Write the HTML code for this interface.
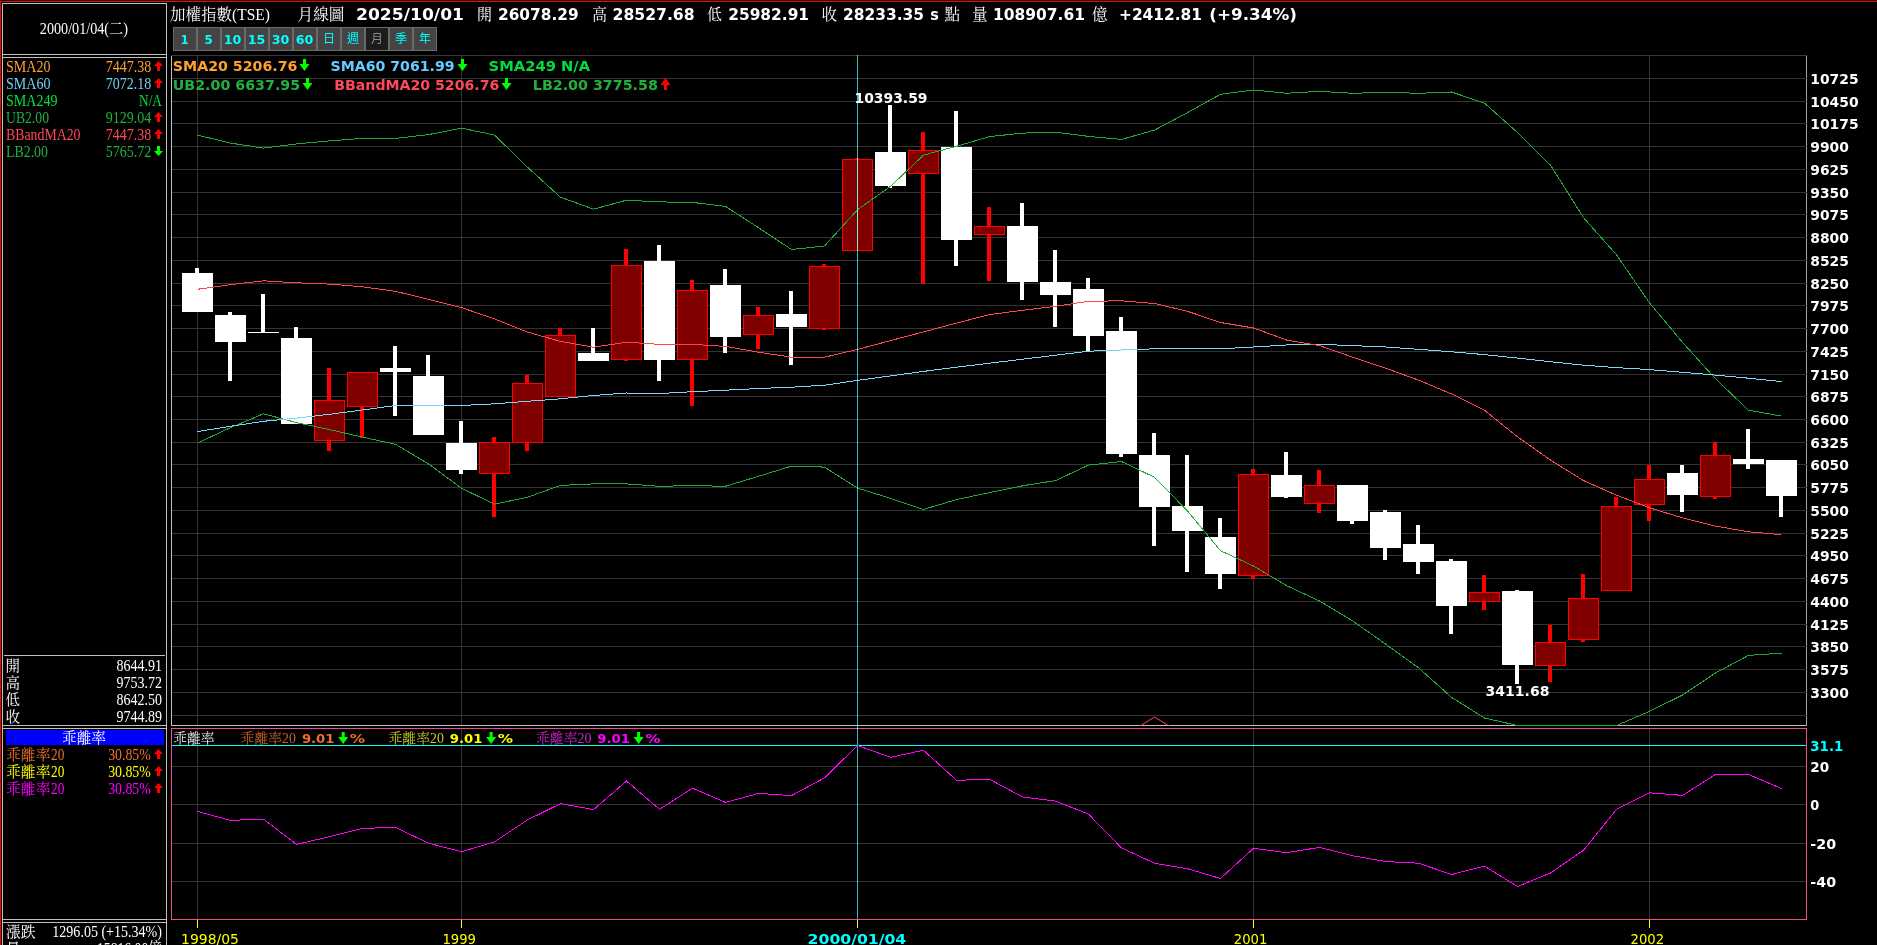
<!DOCTYPE html>
<html lang="zh-Hant"><head><meta charset="utf-8"><title>加權指數(TSE) 月線圖</title>
<style>html,body{margin:0;padding:0;background:#000;width:1877px;height:945px;overflow:hidden}svg text{white-space:pre}</style>
</head><body>
<svg width="1877" height="945" viewBox="0 0 1877 945" style="display:block">
<rect x="0" y="0" width="1877" height="945" fill="#000"/>
<g shape-rendering="crispEdges">
<rect x="0" y="1" width="1877" height="1" fill="#ff0000"/>
<rect x="0" y="1" width="1" height="944" fill="#ff0000"/>
<rect x="2" y="3" width="1" height="942" fill="#c0c0c0"/>
<rect x="166" y="3" width="1" height="942" fill="#c0c0c0"/>
<rect x="2" y="3" width="165" height="1" fill="#c0c0c0"/>
<rect x="2" y="54" width="165" height="1" fill="#c0c0c0"/>
<rect x="2" y="57" width="165" height="1" fill="#c0c0c0"/>
<rect x="2" y="725" width="165" height="1" fill="#c0c0c0"/>
<rect x="2" y="728" width="165" height="1" fill="#c0c0c0"/>
<rect x="2" y="919" width="165" height="1" fill="#c0c0c0"/>
<rect x="2" y="922" width="165" height="1" fill="#c0c0c0"/>
<rect x="4" y="655" width="161" height="1" fill="#c0c0c0"/>
<rect x="6" y="730" width="158" height="15" fill="#0000ff"/>
<rect x="173" y="27" width="24" height="24" fill="#6a6a6a"/>
<rect x="174" y="28" width="22" height="22" fill="#454343"/>
<rect x="197" y="27" width="24" height="24" fill="#6a6a6a"/>
<rect x="198" y="28" width="22" height="22" fill="#454343"/>
<rect x="221" y="27" width="24" height="24" fill="#6a6a6a"/>
<rect x="222" y="28" width="22" height="22" fill="#454343"/>
<rect x="245" y="27" width="24" height="24" fill="#6a6a6a"/>
<rect x="246" y="28" width="22" height="22" fill="#454343"/>
<rect x="269" y="27" width="24" height="24" fill="#6a6a6a"/>
<rect x="270" y="28" width="22" height="22" fill="#454343"/>
<rect x="293" y="27" width="24" height="24" fill="#6a6a6a"/>
<rect x="294" y="28" width="22" height="22" fill="#454343"/>
<rect x="317" y="27" width="24" height="24" fill="#6a6a6a"/>
<rect x="318" y="28" width="22" height="22" fill="#454343"/>
<rect x="341" y="27" width="24" height="24" fill="#6a6a6a"/>
<rect x="342" y="28" width="22" height="22" fill="#454343"/>
<rect x="365" y="27" width="24" height="24" fill="#6a6a6a"/>
<rect x="366" y="28" width="22" height="22" fill="#1c1c1c"/>
<rect x="389" y="27" width="24" height="24" fill="#6a6a6a"/>
<rect x="390" y="28" width="22" height="22" fill="#454343"/>
<rect x="413" y="27" width="24" height="24" fill="#6a6a6a"/>
<rect x="414" y="28" width="22" height="22" fill="#454343"/>
<rect x="197" y="56" width="1" height="669" fill="#343434"/>
<rect x="197" y="729" width="1" height="190" fill="#343434"/>
<rect x="461" y="56" width="1" height="669" fill="#343434"/>
<rect x="461" y="729" width="1" height="190" fill="#343434"/>
<rect x="1253" y="56" width="1" height="669" fill="#343434"/>
<rect x="1253" y="729" width="1" height="190" fill="#343434"/>
<rect x="1649" y="56" width="1" height="669" fill="#343434"/>
<rect x="1649" y="729" width="1" height="190" fill="#343434"/>
<rect x="172" y="766" width="1634" height="1" fill="#343434"/>
<rect x="172" y="804" width="1634" height="1" fill="#343434"/>
<rect x="172" y="843" width="1634" height="1" fill="#343434"/>
<rect x="172" y="881" width="1634" height="1" fill="#343434"/>
<rect x="171" y="55" width="1636" height="1" fill="#383838"/>
<rect x="171" y="56" width="1" height="670" fill="#c0c0c0"/>
<rect x="171" y="725" width="1636" height="1" fill="#c0c0c0"/>
<rect x="1806" y="56" width="1" height="670" fill="#a8a8a8"/>
<rect x="172" y="78" width="1635" height="1" fill="#343434"/>
<rect x="172" y="101" width="1635" height="1" fill="#343434"/>
<rect x="172" y="123" width="1635" height="1" fill="#343434"/>
<rect x="172" y="146" width="1635" height="1" fill="#343434"/>
<rect x="172" y="169" width="1635" height="1" fill="#343434"/>
<rect x="172" y="192" width="1635" height="1" fill="#343434"/>
<rect x="172" y="214" width="1635" height="1" fill="#343434"/>
<rect x="172" y="237" width="1635" height="1" fill="#343434"/>
<rect x="172" y="260" width="1635" height="1" fill="#343434"/>
<rect x="172" y="283" width="1635" height="1" fill="#343434"/>
<rect x="172" y="305" width="1635" height="1" fill="#343434"/>
<rect x="172" y="328" width="1635" height="1" fill="#343434"/>
<rect x="172" y="351" width="1635" height="1" fill="#343434"/>
<rect x="172" y="374" width="1635" height="1" fill="#343434"/>
<rect x="172" y="396" width="1635" height="1" fill="#343434"/>
<rect x="172" y="419" width="1635" height="1" fill="#343434"/>
<rect x="172" y="442" width="1635" height="1" fill="#343434"/>
<rect x="172" y="464" width="1635" height="1" fill="#343434"/>
<rect x="172" y="487" width="1635" height="1" fill="#343434"/>
<rect x="172" y="510" width="1635" height="1" fill="#343434"/>
<rect x="172" y="533" width="1635" height="1" fill="#343434"/>
<rect x="172" y="555" width="1635" height="1" fill="#343434"/>
<rect x="172" y="578" width="1635" height="1" fill="#343434"/>
<rect x="172" y="601" width="1635" height="1" fill="#343434"/>
<rect x="172" y="624" width="1635" height="1" fill="#343434"/>
<rect x="172" y="646" width="1635" height="1" fill="#343434"/>
<rect x="172" y="669" width="1635" height="1" fill="#343434"/>
<rect x="172" y="692" width="1635" height="1" fill="#343434"/>
<rect x="172" y="715" width="1635" height="1" fill="#343434"/>
<rect x="171" y="728" width="1636" height="1" fill="#ee4c98"/>
<rect x="171" y="919" width="1636" height="1" fill="#ee4c98"/>
<rect x="171" y="728" width="1" height="192" fill="#ee4c98"/>
<rect x="1806" y="728" width="1" height="192" fill="#ee4c98"/>
<rect x="197" y="920" width="1" height="8" fill="#ffff00"/>
<rect x="461" y="920" width="1" height="8" fill="#ffff00"/>
<rect x="857" y="920" width="1" height="8" fill="#ffff00"/>
<rect x="1253" y="920" width="1" height="8" fill="#ffff00"/>
<rect x="1649" y="920" width="1" height="8" fill="#ffff00"/>
</g>
<defs><clipPath id="cm"><rect x="172" y="56" width="1634" height="670"/></clipPath></defs>
<g clip-path="url(#cm)">
<g shape-rendering="crispEdges">
<rect x="195" y="268" width="4" height="5" fill="#ffffff"/>
<rect x="182" y="273" width="31" height="39" fill="#ffffff"/>
<rect x="228" y="312" width="4" height="3" fill="#ffffff"/>
<rect x="228" y="342" width="4" height="39" fill="#ffffff"/>
<rect x="215" y="315" width="31" height="27" fill="#ffffff"/>
<rect x="261" y="294" width="4" height="38" fill="#ffffff"/>
<rect x="248" y="332" width="31" height="1" fill="#ffffff"/>
<rect x="294" y="327" width="4" height="11" fill="#ffffff"/>
<rect x="281" y="338" width="31" height="86" fill="#ffffff"/>
<rect x="327" y="368" width="4" height="32" fill="#ff0000"/>
<rect x="327" y="441" width="4" height="10" fill="#ff0000"/>
<rect x="314" y="400" width="31" height="41" fill="#ff0000"/>
<rect x="315" y="401" width="29" height="39" fill="#800000"/>
<rect x="360" y="407" width="4" height="31" fill="#ff0000"/>
<rect x="347" y="372" width="31" height="35" fill="#ff0000"/>
<rect x="348" y="373" width="29" height="33" fill="#800000"/>
<rect x="393" y="346" width="4" height="22" fill="#ffffff"/>
<rect x="393" y="372" width="4" height="44" fill="#ffffff"/>
<rect x="380" y="368" width="31" height="4" fill="#ffffff"/>
<rect x="426" y="355" width="4" height="21" fill="#ffffff"/>
<rect x="413" y="376" width="31" height="59" fill="#ffffff"/>
<rect x="459" y="421" width="4" height="22" fill="#ffffff"/>
<rect x="459" y="470" width="4" height="4" fill="#ffffff"/>
<rect x="446" y="443" width="31" height="27" fill="#ffffff"/>
<rect x="492" y="437" width="4" height="5" fill="#ff0000"/>
<rect x="492" y="474" width="4" height="43" fill="#ff0000"/>
<rect x="479" y="442" width="31" height="32" fill="#ff0000"/>
<rect x="480" y="443" width="29" height="30" fill="#800000"/>
<rect x="525" y="375" width="4" height="8" fill="#ff0000"/>
<rect x="525" y="443" width="4" height="8" fill="#ff0000"/>
<rect x="512" y="383" width="31" height="60" fill="#ff0000"/>
<rect x="513" y="384" width="29" height="58" fill="#800000"/>
<rect x="558" y="328" width="4" height="7" fill="#ff0000"/>
<rect x="545" y="335" width="31" height="62" fill="#ff0000"/>
<rect x="546" y="336" width="29" height="60" fill="#800000"/>
<rect x="591" y="328" width="4" height="25" fill="#ffffff"/>
<rect x="578" y="353" width="31" height="8" fill="#ffffff"/>
<rect x="624" y="249" width="4" height="16" fill="#ff0000"/>
<rect x="624" y="360" width="4" height="1" fill="#ff0000"/>
<rect x="611" y="265" width="31" height="95" fill="#ff0000"/>
<rect x="612" y="266" width="29" height="93" fill="#800000"/>
<rect x="657" y="245" width="4" height="16" fill="#ffffff"/>
<rect x="657" y="360" width="4" height="21" fill="#ffffff"/>
<rect x="644" y="261" width="31" height="99" fill="#ffffff"/>
<rect x="690" y="280" width="4" height="10" fill="#ff0000"/>
<rect x="690" y="360" width="4" height="46" fill="#ff0000"/>
<rect x="677" y="290" width="31" height="70" fill="#ff0000"/>
<rect x="678" y="291" width="29" height="68" fill="#800000"/>
<rect x="723" y="269" width="4" height="16" fill="#ffffff"/>
<rect x="723" y="337" width="4" height="16" fill="#ffffff"/>
<rect x="710" y="285" width="31" height="52" fill="#ffffff"/>
<rect x="756" y="307" width="4" height="8" fill="#ff0000"/>
<rect x="756" y="335" width="4" height="14" fill="#ff0000"/>
<rect x="743" y="315" width="31" height="20" fill="#ff0000"/>
<rect x="744" y="316" width="29" height="18" fill="#800000"/>
<rect x="789" y="291" width="4" height="23" fill="#ffffff"/>
<rect x="789" y="327" width="4" height="38" fill="#ffffff"/>
<rect x="776" y="314" width="31" height="13" fill="#ffffff"/>
<rect x="822" y="264" width="4" height="2" fill="#ff0000"/>
<rect x="822" y="329" width="4" height="1" fill="#ff0000"/>
<rect x="809" y="266" width="31" height="63" fill="#ff0000"/>
<rect x="810" y="267" width="29" height="61" fill="#800000"/>
<rect x="855" y="158" width="4" height="1" fill="#ff0000"/>
<rect x="842" y="159" width="31" height="92" fill="#ff0000"/>
<rect x="843" y="160" width="29" height="90" fill="#800000"/>
<rect x="888" y="105" width="4" height="47" fill="#ffffff"/>
<rect x="888" y="186" width="4" height="2" fill="#ffffff"/>
<rect x="875" y="152" width="31" height="34" fill="#ffffff"/>
<rect x="921" y="132" width="4" height="18" fill="#ff0000"/>
<rect x="921" y="174" width="4" height="110" fill="#ff0000"/>
<rect x="908" y="150" width="31" height="24" fill="#ff0000"/>
<rect x="909" y="151" width="29" height="22" fill="#800000"/>
<rect x="954" y="111" width="4" height="36" fill="#ffffff"/>
<rect x="954" y="240" width="4" height="26" fill="#ffffff"/>
<rect x="941" y="147" width="31" height="93" fill="#ffffff"/>
<rect x="987" y="207" width="4" height="19" fill="#ff0000"/>
<rect x="987" y="235" width="4" height="46" fill="#ff0000"/>
<rect x="974" y="226" width="31" height="9" fill="#ff0000"/>
<rect x="975" y="227" width="29" height="7" fill="#800000"/>
<rect x="1020" y="203" width="4" height="23" fill="#ffffff"/>
<rect x="1020" y="282" width="4" height="18" fill="#ffffff"/>
<rect x="1007" y="226" width="31" height="56" fill="#ffffff"/>
<rect x="1053" y="250" width="4" height="32" fill="#ffffff"/>
<rect x="1053" y="295" width="4" height="32" fill="#ffffff"/>
<rect x="1040" y="282" width="31" height="13" fill="#ffffff"/>
<rect x="1086" y="278" width="4" height="11" fill="#ffffff"/>
<rect x="1086" y="336" width="4" height="15" fill="#ffffff"/>
<rect x="1073" y="289" width="31" height="47" fill="#ffffff"/>
<rect x="1119" y="317" width="4" height="14" fill="#ffffff"/>
<rect x="1119" y="454" width="4" height="3" fill="#ffffff"/>
<rect x="1106" y="331" width="31" height="123" fill="#ffffff"/>
<rect x="1152" y="433" width="4" height="22" fill="#ffffff"/>
<rect x="1152" y="507" width="4" height="39" fill="#ffffff"/>
<rect x="1139" y="455" width="31" height="52" fill="#ffffff"/>
<rect x="1185" y="455" width="4" height="51" fill="#ffffff"/>
<rect x="1185" y="531" width="4" height="41" fill="#ffffff"/>
<rect x="1172" y="506" width="31" height="25" fill="#ffffff"/>
<rect x="1218" y="518" width="4" height="19" fill="#ffffff"/>
<rect x="1218" y="574" width="4" height="15" fill="#ffffff"/>
<rect x="1205" y="537" width="31" height="37" fill="#ffffff"/>
<rect x="1251" y="469" width="4" height="5" fill="#ff0000"/>
<rect x="1251" y="576" width="4" height="3" fill="#ff0000"/>
<rect x="1238" y="474" width="31" height="102" fill="#ff0000"/>
<rect x="1239" y="475" width="29" height="100" fill="#800000"/>
<rect x="1284" y="452" width="4" height="23" fill="#ffffff"/>
<rect x="1284" y="497" width="4" height="1" fill="#ffffff"/>
<rect x="1271" y="475" width="31" height="22" fill="#ffffff"/>
<rect x="1317" y="470" width="4" height="15" fill="#ff0000"/>
<rect x="1317" y="504" width="4" height="9" fill="#ff0000"/>
<rect x="1304" y="485" width="31" height="19" fill="#ff0000"/>
<rect x="1305" y="486" width="29" height="17" fill="#800000"/>
<rect x="1350" y="521" width="4" height="3" fill="#ffffff"/>
<rect x="1337" y="485" width="31" height="36" fill="#ffffff"/>
<rect x="1383" y="510" width="4" height="2" fill="#ffffff"/>
<rect x="1383" y="548" width="4" height="12" fill="#ffffff"/>
<rect x="1370" y="512" width="31" height="36" fill="#ffffff"/>
<rect x="1416" y="525" width="4" height="19" fill="#ffffff"/>
<rect x="1416" y="562" width="4" height="12" fill="#ffffff"/>
<rect x="1403" y="544" width="31" height="18" fill="#ffffff"/>
<rect x="1449" y="559" width="4" height="2" fill="#ffffff"/>
<rect x="1449" y="606" width="4" height="28" fill="#ffffff"/>
<rect x="1436" y="561" width="31" height="45" fill="#ffffff"/>
<rect x="1482" y="575" width="4" height="17" fill="#ff0000"/>
<rect x="1482" y="602" width="4" height="8" fill="#ff0000"/>
<rect x="1469" y="592" width="31" height="10" fill="#ff0000"/>
<rect x="1470" y="593" width="29" height="8" fill="#800000"/>
<rect x="1515" y="590" width="4" height="1" fill="#ffffff"/>
<rect x="1515" y="665" width="4" height="19" fill="#ffffff"/>
<rect x="1502" y="591" width="31" height="74" fill="#ffffff"/>
<rect x="1548" y="625" width="4" height="17" fill="#ff0000"/>
<rect x="1548" y="666" width="4" height="16" fill="#ff0000"/>
<rect x="1535" y="642" width="31" height="24" fill="#ff0000"/>
<rect x="1536" y="643" width="29" height="22" fill="#800000"/>
<rect x="1581" y="574" width="4" height="24" fill="#ff0000"/>
<rect x="1581" y="640" width="4" height="2" fill="#ff0000"/>
<rect x="1568" y="598" width="31" height="42" fill="#ff0000"/>
<rect x="1569" y="599" width="29" height="40" fill="#800000"/>
<rect x="1614" y="497" width="4" height="9" fill="#ff0000"/>
<rect x="1601" y="506" width="31" height="85" fill="#ff0000"/>
<rect x="1602" y="507" width="29" height="83" fill="#800000"/>
<rect x="1647" y="465" width="4" height="14" fill="#ff0000"/>
<rect x="1647" y="505" width="4" height="16" fill="#ff0000"/>
<rect x="1634" y="479" width="31" height="26" fill="#ff0000"/>
<rect x="1635" y="480" width="29" height="24" fill="#800000"/>
<rect x="1680" y="465" width="4" height="8" fill="#ffffff"/>
<rect x="1680" y="495" width="4" height="17" fill="#ffffff"/>
<rect x="1667" y="473" width="31" height="22" fill="#ffffff"/>
<rect x="1713" y="442" width="4" height="13" fill="#ff0000"/>
<rect x="1713" y="497" width="4" height="2" fill="#ff0000"/>
<rect x="1700" y="455" width="31" height="42" fill="#ff0000"/>
<rect x="1701" y="456" width="29" height="40" fill="#800000"/>
<rect x="1746" y="429" width="4" height="30" fill="#ffffff"/>
<rect x="1746" y="464" width="4" height="5" fill="#ffffff"/>
<rect x="1733" y="459" width="31" height="5" fill="#ffffff"/>
<rect x="1779" y="496" width="4" height="21" fill="#ffffff"/>
<rect x="1766" y="460" width="31" height="36" fill="#ffffff"/>
</g>
<polyline points="197.5,135.1 230.5,143.1 263.5,148.1 296.5,143.9 329.5,140.9 362.5,138.4 395.5,138.4 428.5,134.6 461.5,128.1 494.5,135.1 527.5,167.2 560.5,197.2 593.5,209.2 626.5,200.2 659.5,201.9 692.5,202.4 725.5,206.4 758.5,227.7 791.5,249.5 824.5,246 857.5,209.7 890.5,186.4 923.5,155.1 956.5,146.3 989.5,136.6 1022.5,133.1 1055.5,132.1 1088.5,136.4 1121.5,139.4 1154.5,130.1 1187.5,112.6 1220.5,94.3 1253.5,90 1286.5,93.3 1319.5,91.3 1352.5,93.3 1385.5,92.3 1418.5,93.3 1451.5,92 1484.5,103.1 1517.5,132.6 1550.5,165.2 1583.5,217.7 1616.5,254.8 1649.5,302.9 1682.5,342.4 1715.5,378.8 1748.5,410.2 1781.5,416.1" fill="none" stroke="#22aa38" stroke-width="1" shape-rendering="crispEdges"/>
<polyline points="197.5,443.1 230.5,427.6 263.5,413.8 296.5,422.6 329.5,429.6 362.5,437.1 395.5,444.3 428.5,463.9 461.5,488.2 494.5,504.2 527.5,497.2 560.5,485.4 593.5,483.9 626.5,483.9 659.5,486.3 692.5,485.6 725.5,486.3 758.5,476.3 791.5,466.1 824.5,467.1 857.5,488.1 890.5,498.4 923.5,509.4 956.5,499.6 989.5,492.6 1022.5,485.8 1055.5,480.6 1088.5,465.1 1121.5,461.5 1154.5,477.3 1187.5,511 1220.5,550.7 1253.5,566 1286.5,585.6 1319.5,601 1352.5,620.8 1385.5,644 1418.5,667.8 1451.5,697.3 1484.5,718 1517.5,725.5 1550.5,725.5 1583.5,725.5 1616.5,725.5 1649.5,711.4 1682.5,695 1715.5,673 1748.5,655.4 1781.5,653.2" fill="none" stroke="#22aa38" stroke-width="1" shape-rendering="crispEdges"/>
<polyline points="197.5,431.6 230.5,426.3 263.5,421.3 296.5,418.1 329.5,414.3 362.5,410 395.5,405.5 428.5,405.5 461.5,405.5 494.5,403.8 527.5,401.3 560.5,398.8 593.5,395.5 626.5,393 659.5,393.5 692.5,391.7 725.5,390.2 758.5,388.5 791.5,387.2 824.5,385.2 857.5,380.4 890.5,375.9 923.5,371.4 956.5,367.2 989.5,363.2 1022.5,359.2 1055.5,355.2 1088.5,351.2 1121.5,350 1154.5,348.8 1187.5,348.8 1220.5,348.8 1253.5,347 1286.5,345 1319.5,344.3 1352.5,345.6 1385.5,347 1418.5,349.3 1451.5,351.8 1484.5,354.6 1517.5,358.1 1550.5,361.7 1583.5,365.2 1616.5,367.6 1649.5,369.6 1682.5,372.3 1715.5,375.1 1748.5,378.2 1781.5,381.6" fill="none" stroke="#78d6fa" stroke-width="1" shape-rendering="crispEdges"/>
<polyline points="197.5,289.3 230.5,284.6 263.5,280.8 296.5,282.8 329.5,284.1 362.5,286.8 395.5,291.3 428.5,299.3 461.5,307.6 494.5,318.9 527.5,332.1 560.5,341.4 593.5,347.2 626.5,342.2 659.5,344.4 692.5,344.4 725.5,346.4 758.5,352.2 791.5,357.2 824.5,357.2 857.5,349.4 890.5,340.6 923.5,331.9 956.5,323.1 989.5,314.6 1022.5,310.3 1055.5,306.3 1088.5,301.3 1121.5,300.8 1154.5,303.5 1187.5,311.3 1220.5,322.5 1253.5,328 1286.5,340 1319.5,345.6 1352.5,357.1 1385.5,368.1 1418.5,380.1 1451.5,393.9 1484.5,410.3 1517.5,436.8 1550.5,460.1 1583.5,480.6 1616.5,495.2 1649.5,507.8 1682.5,517.9 1715.5,526.1 1748.5,531.8 1781.5,534.6" fill="none" stroke="#ff4550" stroke-width="1" shape-rendering="crispEdges"/>
<polyline points="1140,726 1154.5,717 1169,726" fill="none" stroke="#ff4550" stroke-width="1"/>
</g>
<g shape-rendering="crispEdges" style="mix-blend-mode:screen">
<rect x="857" y="55" width="1" height="864" fill="#33bbbb"/>
<rect x="172" y="745" width="1634" height="1" fill="#00ffff"/>
</g>
<rect x="857" y="160" width="1" height="90" fill="#8ae8e8" shape-rendering="crispEdges"/>
<polyline points="197.5,811.4 230.5,820.4 263.5,819.1 296.5,844.4 329.5,836.7 362.5,828.4 395.5,827.4 428.5,843.2 461.5,851.7 494.5,841.9 527.5,819.9 560.5,803.6 593.5,809.6 626.5,781.1 659.5,809.4 692.5,788.1 725.5,802.4 758.5,793.4 791.5,795.6 824.5,777.8 857.5,745.5 890.5,757.3 923.5,750.3 956.5,780.3 989.5,779.3 1022.5,796.9 1055.5,801.1 1088.5,814.1 1121.5,847.9 1154.5,863.2 1187.5,868.7 1220.5,878.5 1253.5,848.2 1286.5,852.7 1319.5,847.4 1352.5,855.7 1385.5,861.5 1418.5,863.2 1451.5,874.5 1484.5,866.2 1517.5,886.5 1550.5,873 1583.5,850.3 1616.5,809.4 1649.5,792.8 1682.5,795.4 1715.5,774.4 1748.5,774.4 1781.5,788.6" fill="none" stroke="#ff00ff" stroke-width="1" shape-rendering="crispEdges"/>
<text x="170" y="20" font-family="'Liberation Serif','Noto Serif CJK SC',serif" font-size="16" font-weight="normal" fill="#fff" textLength="100" lengthAdjust="spacingAndGlyphs">加權指數(TSE)</text>
<text x="297.5" y="20" font-family="'Liberation Serif','Noto Serif CJK SC',serif" font-size="16" font-weight="normal" fill="#fff" textLength="47" lengthAdjust="spacingAndGlyphs">月線圖</text>
<text x="356" y="20" font-family="'DejaVu Sans','Liberation Sans',sans-serif" font-size="16" font-weight="bold" fill="#fff" textLength="108" lengthAdjust="spacingAndGlyphs">2025/10/01</text>
<text x="477" y="20" font-family="'Liberation Serif','Noto Serif CJK SC',serif" font-size="16" font-weight="normal" fill="#fff" textLength="15" lengthAdjust="spacingAndGlyphs">開</text>
<text x="498" y="20" font-family="'DejaVu Sans','Liberation Sans',sans-serif" font-size="16" font-weight="bold" fill="#fff" textLength="80.6" lengthAdjust="spacingAndGlyphs">26078.29</text>
<text x="592" y="20" font-family="'Liberation Serif','Noto Serif CJK SC',serif" font-size="16" font-weight="normal" fill="#fff" textLength="15" lengthAdjust="spacingAndGlyphs">高</text>
<text x="612.5" y="20" font-family="'DejaVu Sans','Liberation Sans',sans-serif" font-size="16" font-weight="bold" fill="#fff" textLength="82.1" lengthAdjust="spacingAndGlyphs">28527.68</text>
<text x="707" y="20" font-family="'Liberation Serif','Noto Serif CJK SC',serif" font-size="16" font-weight="normal" fill="#fff" textLength="15" lengthAdjust="spacingAndGlyphs">低</text>
<text x="728.2" y="20" font-family="'DejaVu Sans','Liberation Sans',sans-serif" font-size="16" font-weight="bold" fill="#fff" textLength="80.9" lengthAdjust="spacingAndGlyphs">25982.91</text>
<text x="821.5" y="20" font-family="'Liberation Serif','Noto Serif CJK SC',serif" font-size="16" font-weight="normal" fill="#fff" textLength="15.5" lengthAdjust="spacingAndGlyphs">收</text>
<text x="843" y="20" font-family="'DejaVu Sans','Liberation Sans',sans-serif" font-size="16" font-weight="bold" fill="#fff" textLength="81" lengthAdjust="spacingAndGlyphs">28233.35</text>
<text x="930.3" y="20" font-family="'DejaVu Sans','Liberation Sans',sans-serif" font-size="16" font-weight="bold" fill="#fff" textLength="8.6" lengthAdjust="spacingAndGlyphs">s</text>
<text x="944.5" y="20" font-family="'Liberation Serif','Noto Serif CJK SC',serif" font-size="16" font-weight="normal" fill="#fff" textLength="15.5" lengthAdjust="spacingAndGlyphs">點</text>
<text x="972" y="20" font-family="'Liberation Serif','Noto Serif CJK SC',serif" font-size="16" font-weight="normal" fill="#fff" textLength="15.5" lengthAdjust="spacingAndGlyphs">量</text>
<text x="993" y="20" font-family="'DejaVu Sans','Liberation Sans',sans-serif" font-size="16" font-weight="bold" fill="#fff" textLength="92" lengthAdjust="spacingAndGlyphs">108907.61</text>
<text x="1092" y="20" font-family="'Liberation Serif','Noto Serif CJK SC',serif" font-size="16" font-weight="normal" fill="#fff" textLength="15.5" lengthAdjust="spacingAndGlyphs">億</text>
<text x="1119" y="20" font-family="'DejaVu Sans','Liberation Sans',sans-serif" font-size="16" font-weight="bold" fill="#fff" textLength="83" lengthAdjust="spacingAndGlyphs">+2412.81</text>
<text x="1209.3" y="20" font-family="'DejaVu Sans','Liberation Sans',sans-serif" font-size="16" font-weight="bold" fill="#fff" textLength="87.7" lengthAdjust="spacingAndGlyphs">(+9.34%)</text>
<text x="184.6" y="44" font-family="'DejaVu Sans','Liberation Sans',sans-serif" font-size="12.3" font-weight="bold" fill="#00ffff" textLength="8.2" lengthAdjust="spacingAndGlyphs" text-anchor="middle">1</text>
<text x="208.6" y="44" font-family="'DejaVu Sans','Liberation Sans',sans-serif" font-size="12.3" font-weight="bold" fill="#00ffff" textLength="8.2" lengthAdjust="spacingAndGlyphs" text-anchor="middle">5</text>
<text x="232.6" y="44" font-family="'DejaVu Sans','Liberation Sans',sans-serif" font-size="12.3" font-weight="bold" fill="#00ffff" textLength="17.6" lengthAdjust="spacingAndGlyphs" text-anchor="middle">10</text>
<text x="256.6" y="44" font-family="'DejaVu Sans','Liberation Sans',sans-serif" font-size="12.3" font-weight="bold" fill="#00ffff" textLength="17.6" lengthAdjust="spacingAndGlyphs" text-anchor="middle">15</text>
<text x="280.6" y="44" font-family="'DejaVu Sans','Liberation Sans',sans-serif" font-size="12.3" font-weight="bold" fill="#00ffff" textLength="17.6" lengthAdjust="spacingAndGlyphs" text-anchor="middle">30</text>
<text x="304.6" y="44" font-family="'DejaVu Sans','Liberation Sans',sans-serif" font-size="12.3" font-weight="bold" fill="#00ffff" textLength="17.6" lengthAdjust="spacingAndGlyphs" text-anchor="middle">60</text>
<text x="329" y="43.4" font-family="'Liberation Sans','Noto Sans CJK TC',sans-serif" font-size="12" font-weight="normal" fill="#00ffff" text-anchor="middle">日</text>
<text x="353" y="43.4" font-family="'Liberation Sans','Noto Sans CJK TC',sans-serif" font-size="12" font-weight="normal" fill="#00ffff" text-anchor="middle">週</text>
<text x="377" y="43.4" font-family="'Liberation Sans','Noto Sans CJK TC',sans-serif" font-size="12" font-weight="normal" fill="#8a8a8a" text-anchor="middle">月</text>
<text x="401" y="43.4" font-family="'Liberation Sans','Noto Sans CJK TC',sans-serif" font-size="12" font-weight="normal" fill="#00ffff" text-anchor="middle">季</text>
<text x="425" y="43.4" font-family="'Liberation Sans','Noto Sans CJK TC',sans-serif" font-size="12" font-weight="normal" fill="#00ffff" text-anchor="middle">年</text>
<text x="39.8" y="34" font-family="'Liberation Serif','Noto Serif CJK SC',serif" font-size="16" font-weight="normal" fill="#fff" textLength="88.2" lengthAdjust="spacingAndGlyphs">2000/01/04(二)</text>
<text x="6" y="72" font-family="'Liberation Serif','Noto Serif CJK SC',serif" font-size="16" font-weight="normal" fill="#ffa030" textLength="44.4" lengthAdjust="spacingAndGlyphs">SMA20</text>
<text x="105.7" y="72" font-family="'Liberation Serif','Noto Serif CJK SC',serif" font-size="16" font-weight="normal" fill="#ffa030" textLength="45.5" lengthAdjust="spacingAndGlyphs">7447.38</text>
<path d="M158.5 61 L163 66 L160 66 L160 71 L157 71 L157 66 L154 66 Z" fill="#ff0000"/>
<text x="6" y="89" font-family="'Liberation Serif','Noto Serif CJK SC',serif" font-size="16" font-weight="normal" fill="#70d0f5" textLength="44.4" lengthAdjust="spacingAndGlyphs">SMA60</text>
<text x="105.7" y="89" font-family="'Liberation Serif','Noto Serif CJK SC',serif" font-size="16" font-weight="normal" fill="#70d0f5" textLength="45.5" lengthAdjust="spacingAndGlyphs">7072.18</text>
<path d="M158.5 78 L163 83 L160 83 L160 88 L157 88 L157 83 L154 83 Z" fill="#ff0000"/>
<text x="6" y="106" font-family="'Liberation Serif','Noto Serif CJK SC',serif" font-size="16" font-weight="normal" fill="#00e040" textLength="51.5" lengthAdjust="spacingAndGlyphs">SMA249</text>
<text x="139" y="106" font-family="'Liberation Serif','Noto Serif CJK SC',serif" font-size="16" font-weight="normal" fill="#00e040" textLength="23" lengthAdjust="spacingAndGlyphs">N/A</text>
<text x="6" y="123" font-family="'Liberation Serif','Noto Serif CJK SC',serif" font-size="16" font-weight="normal" fill="#22b040" textLength="43" lengthAdjust="spacingAndGlyphs">UB2.00</text>
<text x="105.7" y="123" font-family="'Liberation Serif','Noto Serif CJK SC',serif" font-size="16" font-weight="normal" fill="#22b040" textLength="45.5" lengthAdjust="spacingAndGlyphs">9129.04</text>
<path d="M158.5 112 L163 117 L160 117 L160 122 L157 122 L157 117 L154 117 Z" fill="#ff0000"/>
<text x="6" y="140" font-family="'Liberation Serif','Noto Serif CJK SC',serif" font-size="16" font-weight="normal" fill="#ff4858" textLength="74.5" lengthAdjust="spacingAndGlyphs">BBandMA20</text>
<text x="105.7" y="140" font-family="'Liberation Serif','Noto Serif CJK SC',serif" font-size="16" font-weight="normal" fill="#ff4858" textLength="45.5" lengthAdjust="spacingAndGlyphs">7447.38</text>
<path d="M158.5 129 L163 134 L160 134 L160 139 L157 139 L157 134 L154 134 Z" fill="#ff0000"/>
<text x="6" y="157" font-family="'Liberation Serif','Noto Serif CJK SC',serif" font-size="16" font-weight="normal" fill="#22b040" textLength="42" lengthAdjust="spacingAndGlyphs">LB2.00</text>
<text x="105.7" y="157" font-family="'Liberation Serif','Noto Serif CJK SC',serif" font-size="16" font-weight="normal" fill="#22b040" textLength="45.5" lengthAdjust="spacingAndGlyphs">5765.72</text>
<path d="M158.5 156 L163 151 L160 151 L160 146 L157 146 L157 151 L154 151 Z" fill="#00ff00"/>
<text x="5.5" y="671" font-family="'Liberation Serif','Noto Serif CJK SC',serif" font-size="15" font-weight="normal" fill="#fff" textLength="14.5" lengthAdjust="spacingAndGlyphs">開</text>
<text x="116.5" y="671" font-family="'Liberation Serif','Noto Serif CJK SC',serif" font-size="16" font-weight="normal" fill="#fff" textLength="45.5" lengthAdjust="spacingAndGlyphs">8644.91</text>
<text x="5.5" y="688" font-family="'Liberation Serif','Noto Serif CJK SC',serif" font-size="15" font-weight="normal" fill="#fff" textLength="14.5" lengthAdjust="spacingAndGlyphs">高</text>
<text x="116.5" y="688" font-family="'Liberation Serif','Noto Serif CJK SC',serif" font-size="16" font-weight="normal" fill="#fff" textLength="45.5" lengthAdjust="spacingAndGlyphs">9753.72</text>
<text x="5.5" y="705" font-family="'Liberation Serif','Noto Serif CJK SC',serif" font-size="15" font-weight="normal" fill="#fff" textLength="14.5" lengthAdjust="spacingAndGlyphs">低</text>
<text x="116.5" y="705" font-family="'Liberation Serif','Noto Serif CJK SC',serif" font-size="16" font-weight="normal" fill="#fff" textLength="45.5" lengthAdjust="spacingAndGlyphs">8642.50</text>
<text x="5.5" y="722" font-family="'Liberation Serif','Noto Serif CJK SC',serif" font-size="15" font-weight="normal" fill="#fff" textLength="14.5" lengthAdjust="spacingAndGlyphs">收</text>
<text x="116.5" y="722" font-family="'Liberation Serif','Noto Serif CJK SC',serif" font-size="16" font-weight="normal" fill="#fff" textLength="45.5" lengthAdjust="spacingAndGlyphs">9744.89</text>
<text x="62" y="743" font-family="'Liberation Serif','Noto Serif CJK SC',serif" font-size="15" font-weight="normal" fill="#fff" textLength="44" lengthAdjust="spacingAndGlyphs">乖離率</text>
<text x="6" y="760" font-family="'Liberation Serif','Noto Serif CJK SC',serif" font-size="15" font-weight="normal" fill="#f07028" textLength="44.5" lengthAdjust="spacingAndGlyphs">乖離率</text>
<text x="51" y="760" font-family="'Liberation Serif','Noto Serif CJK SC',serif" font-size="16" font-weight="normal" fill="#f07028" textLength="13.3" lengthAdjust="spacingAndGlyphs">20</text>
<text x="108.2" y="760" font-family="'Liberation Serif','Noto Serif CJK SC',serif" font-size="16" font-weight="normal" fill="#f07028" textLength="42.6" lengthAdjust="spacingAndGlyphs">30.85%</text>
<path d="M158.5 749 L163 754 L160 754 L160 759 L157 759 L157 754 L154 754 Z" fill="#ff0000"/>
<text x="6" y="777" font-family="'Liberation Serif','Noto Serif CJK SC',serif" font-size="15" font-weight="normal" fill="#ffff00" textLength="44.5" lengthAdjust="spacingAndGlyphs">乖離率</text>
<text x="51" y="777" font-family="'Liberation Serif','Noto Serif CJK SC',serif" font-size="16" font-weight="normal" fill="#ffff00" textLength="13.3" lengthAdjust="spacingAndGlyphs">20</text>
<text x="108.2" y="777" font-family="'Liberation Serif','Noto Serif CJK SC',serif" font-size="16" font-weight="normal" fill="#ffff00" textLength="42.6" lengthAdjust="spacingAndGlyphs">30.85%</text>
<path d="M158.5 766 L163 771 L160 771 L160 776 L157 776 L157 771 L154 771 Z" fill="#ff0000"/>
<text x="6" y="794" font-family="'Liberation Serif','Noto Serif CJK SC',serif" font-size="15" font-weight="normal" fill="#ff00ff" textLength="44.5" lengthAdjust="spacingAndGlyphs">乖離率</text>
<text x="51" y="794" font-family="'Liberation Serif','Noto Serif CJK SC',serif" font-size="16" font-weight="normal" fill="#ff00ff" textLength="13.3" lengthAdjust="spacingAndGlyphs">20</text>
<text x="108.2" y="794" font-family="'Liberation Serif','Noto Serif CJK SC',serif" font-size="16" font-weight="normal" fill="#ff00ff" textLength="42.6" lengthAdjust="spacingAndGlyphs">30.85%</text>
<path d="M158.5 783 L163 788 L160 788 L160 793 L157 793 L157 788 L154 788 Z" fill="#ff0000"/>
<text x="6" y="937" font-family="'Liberation Serif','Noto Serif CJK SC',serif" font-size="15" font-weight="normal" fill="#fff" textLength="29.5" lengthAdjust="spacingAndGlyphs">漲跌</text>
<text x="52.3" y="937" font-family="'Liberation Serif','Noto Serif CJK SC',serif" font-size="16" font-weight="normal" fill="#fff" textLength="109.7" lengthAdjust="spacingAndGlyphs">1296.05 (+15.34%)</text>
<text x="6" y="954" font-family="'Liberation Serif','Noto Serif CJK SC',serif" font-size="15" font-weight="normal" fill="#fff" textLength="14.5" lengthAdjust="spacingAndGlyphs">量</text>
<text x="97" y="954" font-family="'Liberation Serif','Noto Serif CJK SC',serif" font-size="16" font-weight="normal" fill="#fff" textLength="65" lengthAdjust="spacingAndGlyphs">15816.00億</text>
<text x="172.8" y="71" font-family="'DejaVu Sans','Liberation Sans',sans-serif" font-size="13.8" font-weight="bold" fill="#ffa030" textLength="124.7" lengthAdjust="spacingAndGlyphs">SMA20 5206.76</text>
<path d="M304.5 71 L309.5 64 L306 64 L306 59 L303 59 L303 64 L299.5 64 Z" fill="#00ff00"/>
<text x="330.5" y="71" font-family="'DejaVu Sans','Liberation Sans',sans-serif" font-size="13.8" font-weight="bold" fill="#66ccff" textLength="124.1" lengthAdjust="spacingAndGlyphs">SMA60 7061.99</text>
<path d="M462.5 71 L467.5 64 L464 64 L464 59 L461 59 L461 64 L457.5 64 Z" fill="#00ff00"/>
<text x="488.6" y="71" font-family="'DejaVu Sans','Liberation Sans',sans-serif" font-size="13.8" font-weight="bold" fill="#00dd40" textLength="101.5" lengthAdjust="spacingAndGlyphs">SMA249 N/A</text>
<text x="172.8" y="90" font-family="'DejaVu Sans','Liberation Sans',sans-serif" font-size="13.8" font-weight="bold" fill="#22b040" textLength="127.3" lengthAdjust="spacingAndGlyphs">UB2.00 6637.95</text>
<path d="M307.5 90 L312.5 83 L309 83 L309 78 L306 78 L306 83 L302.5 83 Z" fill="#00ff00"/>
<text x="334.3" y="90" font-family="'DejaVu Sans','Liberation Sans',sans-serif" font-size="13.8" font-weight="bold" fill="#ff4858" textLength="165" lengthAdjust="spacingAndGlyphs">BBandMA20 5206.76</text>
<path d="M506.5 90 L511.5 83 L508 83 L508 78 L505 78 L505 83 L501.5 83 Z" fill="#00ff00"/>
<text x="532.8" y="90" font-family="'DejaVu Sans','Liberation Sans',sans-serif" font-size="13.8" font-weight="bold" fill="#22b040" textLength="125.1" lengthAdjust="spacingAndGlyphs">LB2.00 3775.58</text>
<path d="M665.5 78 L670.5 85 L667 85 L667 90 L664 90 L664 85 L660.5 85 Z" fill="#ff0000"/>
<text x="1810.3" y="84" font-family="'DejaVu Sans','Liberation Sans',sans-serif" font-size="13.8" font-weight="bold" fill="#fff" textLength="48.3" lengthAdjust="spacingAndGlyphs">10725</text>
<text x="1810.3" y="107" font-family="'DejaVu Sans','Liberation Sans',sans-serif" font-size="13.8" font-weight="bold" fill="#fff" textLength="48.3" lengthAdjust="spacingAndGlyphs">10450</text>
<text x="1810.3" y="129" font-family="'DejaVu Sans','Liberation Sans',sans-serif" font-size="13.8" font-weight="bold" fill="#fff" textLength="48.3" lengthAdjust="spacingAndGlyphs">10175</text>
<text x="1810.3" y="152" font-family="'DejaVu Sans','Liberation Sans',sans-serif" font-size="13.8" font-weight="bold" fill="#fff" textLength="38.6" lengthAdjust="spacingAndGlyphs">9900</text>
<text x="1810.3" y="175" font-family="'DejaVu Sans','Liberation Sans',sans-serif" font-size="13.8" font-weight="bold" fill="#fff" textLength="38.6" lengthAdjust="spacingAndGlyphs">9625</text>
<text x="1810.3" y="198" font-family="'DejaVu Sans','Liberation Sans',sans-serif" font-size="13.8" font-weight="bold" fill="#fff" textLength="38.6" lengthAdjust="spacingAndGlyphs">9350</text>
<text x="1810.3" y="220" font-family="'DejaVu Sans','Liberation Sans',sans-serif" font-size="13.8" font-weight="bold" fill="#fff" textLength="38.6" lengthAdjust="spacingAndGlyphs">9075</text>
<text x="1810.3" y="243" font-family="'DejaVu Sans','Liberation Sans',sans-serif" font-size="13.8" font-weight="bold" fill="#fff" textLength="38.6" lengthAdjust="spacingAndGlyphs">8800</text>
<text x="1810.3" y="266" font-family="'DejaVu Sans','Liberation Sans',sans-serif" font-size="13.8" font-weight="bold" fill="#fff" textLength="38.6" lengthAdjust="spacingAndGlyphs">8525</text>
<text x="1810.3" y="289" font-family="'DejaVu Sans','Liberation Sans',sans-serif" font-size="13.8" font-weight="bold" fill="#fff" textLength="38.6" lengthAdjust="spacingAndGlyphs">8250</text>
<text x="1810.3" y="311" font-family="'DejaVu Sans','Liberation Sans',sans-serif" font-size="13.8" font-weight="bold" fill="#fff" textLength="38.6" lengthAdjust="spacingAndGlyphs">7975</text>
<text x="1810.3" y="334" font-family="'DejaVu Sans','Liberation Sans',sans-serif" font-size="13.8" font-weight="bold" fill="#fff" textLength="38.6" lengthAdjust="spacingAndGlyphs">7700</text>
<text x="1810.3" y="357" font-family="'DejaVu Sans','Liberation Sans',sans-serif" font-size="13.8" font-weight="bold" fill="#fff" textLength="38.6" lengthAdjust="spacingAndGlyphs">7425</text>
<text x="1810.3" y="380" font-family="'DejaVu Sans','Liberation Sans',sans-serif" font-size="13.8" font-weight="bold" fill="#fff" textLength="38.6" lengthAdjust="spacingAndGlyphs">7150</text>
<text x="1810.3" y="402" font-family="'DejaVu Sans','Liberation Sans',sans-serif" font-size="13.8" font-weight="bold" fill="#fff" textLength="38.6" lengthAdjust="spacingAndGlyphs">6875</text>
<text x="1810.3" y="425" font-family="'DejaVu Sans','Liberation Sans',sans-serif" font-size="13.8" font-weight="bold" fill="#fff" textLength="38.6" lengthAdjust="spacingAndGlyphs">6600</text>
<text x="1810.3" y="448" font-family="'DejaVu Sans','Liberation Sans',sans-serif" font-size="13.8" font-weight="bold" fill="#fff" textLength="38.6" lengthAdjust="spacingAndGlyphs">6325</text>
<text x="1810.3" y="470" font-family="'DejaVu Sans','Liberation Sans',sans-serif" font-size="13.8" font-weight="bold" fill="#fff" textLength="38.6" lengthAdjust="spacingAndGlyphs">6050</text>
<text x="1810.3" y="493" font-family="'DejaVu Sans','Liberation Sans',sans-serif" font-size="13.8" font-weight="bold" fill="#fff" textLength="38.6" lengthAdjust="spacingAndGlyphs">5775</text>
<text x="1810.3" y="516" font-family="'DejaVu Sans','Liberation Sans',sans-serif" font-size="13.8" font-weight="bold" fill="#fff" textLength="38.6" lengthAdjust="spacingAndGlyphs">5500</text>
<text x="1810.3" y="539" font-family="'DejaVu Sans','Liberation Sans',sans-serif" font-size="13.8" font-weight="bold" fill="#fff" textLength="38.6" lengthAdjust="spacingAndGlyphs">5225</text>
<text x="1810.3" y="561" font-family="'DejaVu Sans','Liberation Sans',sans-serif" font-size="13.8" font-weight="bold" fill="#fff" textLength="38.6" lengthAdjust="spacingAndGlyphs">4950</text>
<text x="1810.3" y="584" font-family="'DejaVu Sans','Liberation Sans',sans-serif" font-size="13.8" font-weight="bold" fill="#fff" textLength="38.6" lengthAdjust="spacingAndGlyphs">4675</text>
<text x="1810.3" y="607" font-family="'DejaVu Sans','Liberation Sans',sans-serif" font-size="13.8" font-weight="bold" fill="#fff" textLength="38.6" lengthAdjust="spacingAndGlyphs">4400</text>
<text x="1810.3" y="630" font-family="'DejaVu Sans','Liberation Sans',sans-serif" font-size="13.8" font-weight="bold" fill="#fff" textLength="38.6" lengthAdjust="spacingAndGlyphs">4125</text>
<text x="1810.3" y="652" font-family="'DejaVu Sans','Liberation Sans',sans-serif" font-size="13.8" font-weight="bold" fill="#fff" textLength="38.6" lengthAdjust="spacingAndGlyphs">3850</text>
<text x="1810.3" y="675" font-family="'DejaVu Sans','Liberation Sans',sans-serif" font-size="13.8" font-weight="bold" fill="#fff" textLength="38.6" lengthAdjust="spacingAndGlyphs">3575</text>
<text x="1810.3" y="698" font-family="'DejaVu Sans','Liberation Sans',sans-serif" font-size="13.8" font-weight="bold" fill="#fff" textLength="38.6" lengthAdjust="spacingAndGlyphs">3300</text>
<text x="1810.3" y="751" font-family="'DejaVu Sans','Liberation Sans',sans-serif" font-size="13.8" font-weight="bold" fill="#00ffff" textLength="33" lengthAdjust="spacingAndGlyphs">31.1</text>
<text x="1810.3" y="771.8" font-family="'DejaVu Sans','Liberation Sans',sans-serif" font-size="13.8" font-weight="bold" fill="#fff" textLength="18.8" lengthAdjust="spacingAndGlyphs">20</text>
<text x="1810.3" y="809.8" font-family="'DejaVu Sans','Liberation Sans',sans-serif" font-size="13.8" font-weight="bold" fill="#fff" textLength="9" lengthAdjust="spacingAndGlyphs">0</text>
<text x="1810.3" y="848.7" font-family="'DejaVu Sans','Liberation Sans',sans-serif" font-size="13.8" font-weight="bold" fill="#fff" textLength="25.8" lengthAdjust="spacingAndGlyphs">-20</text>
<text x="1810.3" y="886.7" font-family="'DejaVu Sans','Liberation Sans',sans-serif" font-size="13.8" font-weight="bold" fill="#fff" textLength="25.8" lengthAdjust="spacingAndGlyphs">-40</text>
<text x="854.5" y="103" font-family="'DejaVu Sans','Liberation Sans',sans-serif" font-size="13.8" font-weight="bold" fill="#fff" textLength="73" lengthAdjust="spacingAndGlyphs">10393.59</text>
<text x="1485.6" y="696" font-family="'DejaVu Sans','Liberation Sans',sans-serif" font-size="13.8" font-weight="bold" fill="#fff" textLength="63.8" lengthAdjust="spacingAndGlyphs">3411.68</text>
<text x="173.3" y="743" font-family="'Liberation Serif','Noto Serif CJK SC',serif" font-size="14" font-weight="normal" fill="#e8e8e8" textLength="41.3" lengthAdjust="spacingAndGlyphs">乖離率</text>
<text x="240.6" y="743" font-family="'Liberation Serif','Noto Serif CJK SC',serif" font-size="14" font-weight="normal" fill="#c86428" textLength="55.3" lengthAdjust="spacingAndGlyphs">乖離率20</text>
<text x="301.9" y="743" font-family="'DejaVu Sans','Liberation Sans',sans-serif" font-size="13" font-weight="bold" fill="#f07028" textLength="32.6" lengthAdjust="spacingAndGlyphs">9.01</text>
<path d="M343.2 744 L348.2 737 L344.7 737 L344.7 732 L341.7 732 L341.7 737 L338.2 737 Z" fill="#00ff00"/>
<text x="349.8" y="743" font-family="'DejaVu Sans','Liberation Sans',sans-serif" font-size="13" font-weight="bold" fill="#f07028" textLength="15.3" lengthAdjust="spacingAndGlyphs">%</text>
<text x="388.5" y="743" font-family="'Liberation Serif','Noto Serif CJK SC',serif" font-size="14" font-weight="normal" fill="#c8c828" textLength="55.3" lengthAdjust="spacingAndGlyphs">乖離率20</text>
<text x="449.8" y="743" font-family="'DejaVu Sans','Liberation Sans',sans-serif" font-size="13" font-weight="bold" fill="#ffff00" textLength="32.6" lengthAdjust="spacingAndGlyphs">9.01</text>
<path d="M491.1 744 L496.1 737 L492.6 737 L492.6 732 L489.6 732 L489.6 737 L486.1 737 Z" fill="#00ff00"/>
<text x="497.7" y="743" font-family="'DejaVu Sans','Liberation Sans',sans-serif" font-size="13" font-weight="bold" fill="#ffff00" textLength="15.3" lengthAdjust="spacingAndGlyphs">%</text>
<text x="536" y="743" font-family="'Liberation Serif','Noto Serif CJK SC',serif" font-size="14" font-weight="normal" fill="#c828c8" textLength="55.3" lengthAdjust="spacingAndGlyphs">乖離率20</text>
<text x="597.3" y="743" font-family="'DejaVu Sans','Liberation Sans',sans-serif" font-size="13" font-weight="bold" fill="#ff00ff" textLength="32.6" lengthAdjust="spacingAndGlyphs">9.01</text>
<path d="M638.6 744 L643.6 737 L640.1 737 L640.1 732 L637.1 732 L637.1 737 L633.6 737 Z" fill="#00ff00"/>
<text x="645.2" y="743" font-family="'DejaVu Sans','Liberation Sans',sans-serif" font-size="13" font-weight="bold" fill="#ff00ff" textLength="15.3" lengthAdjust="spacingAndGlyphs">%</text>
<text x="181" y="944" font-family="'DejaVu Sans','Liberation Sans',sans-serif" font-size="13.5" font-weight="normal" fill="#ffff00" textLength="58" lengthAdjust="spacingAndGlyphs">1998/05</text>
<text x="442.4" y="944" font-family="'DejaVu Sans','Liberation Sans',sans-serif" font-size="13.5" font-weight="normal" fill="#ffff00" textLength="33.6" lengthAdjust="spacingAndGlyphs">1999</text>
<text x="1233.8" y="944" font-family="'DejaVu Sans','Liberation Sans',sans-serif" font-size="13.5" font-weight="normal" fill="#ffff00" textLength="33.6" lengthAdjust="spacingAndGlyphs">2001</text>
<text x="1630.5" y="944" font-family="'DejaVu Sans','Liberation Sans',sans-serif" font-size="13.5" font-weight="normal" fill="#ffff00" textLength="33.6" lengthAdjust="spacingAndGlyphs">2002</text>
<text x="807.6" y="943.6" font-family="'DejaVu Sans','Liberation Sans',sans-serif" font-size="14" font-weight="bold" fill="#00ffff" textLength="98.6" lengthAdjust="spacingAndGlyphs">2000/01/04</text>
</svg>
</body></html>
